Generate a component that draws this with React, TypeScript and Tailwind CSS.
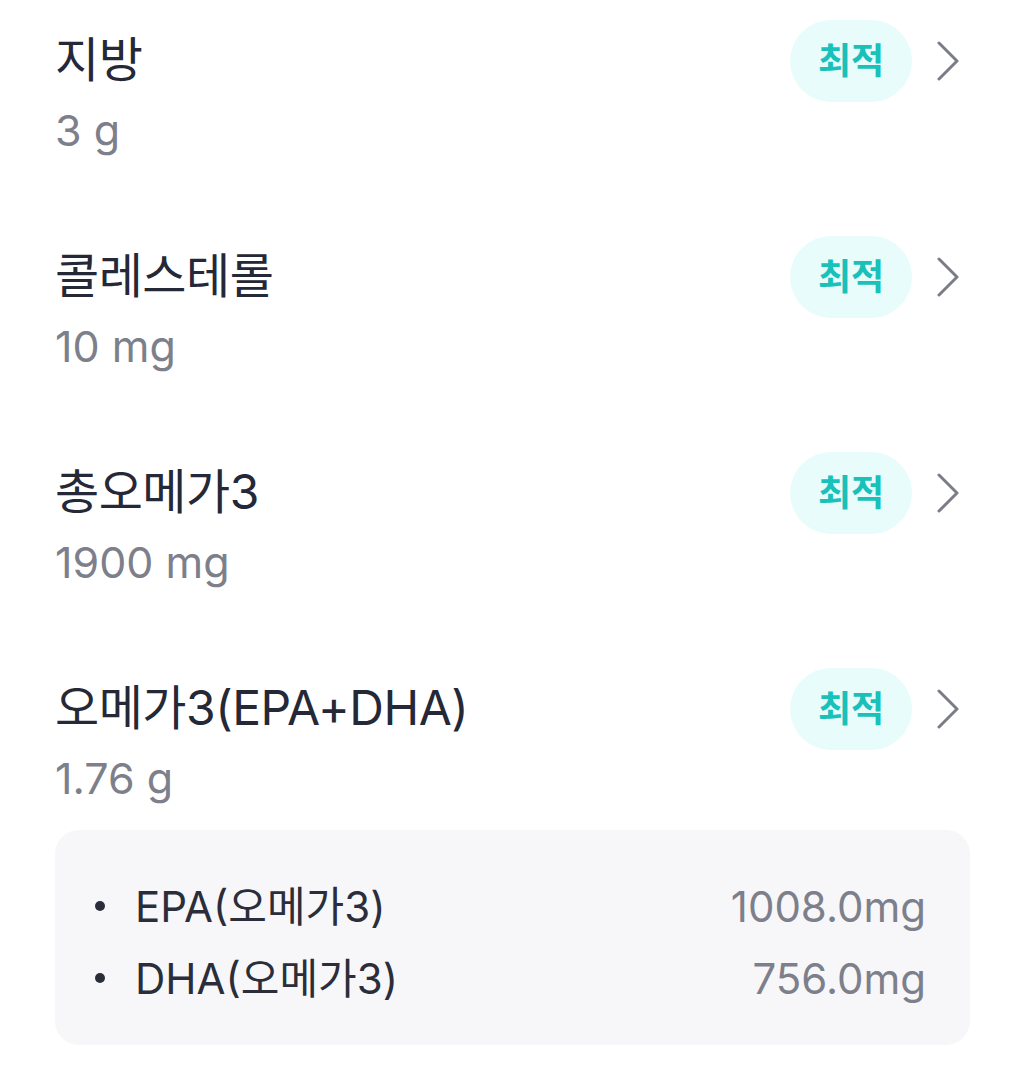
const nutrients = [
  { name: '지방', amount: '3 g' },
  { name: '콜레스테롤', amount: '10 mg' },
  { name: '총오메가3', amount: '1900 mg' },
  { name: '오메가3(EPA+DHA)', amount: '1.76 g' },
];

const details = [
  { name: 'EPA(오메가3)', value: '1008.0mg' },
  { name: 'DHA(오메가3)', value: '756.0mg' },
];

export default function App() {
  return (
    <div className="min-h-screen bg-white px-[55px] font-['Inter','Noto_Sans_CJK_KR',sans-serif]">
      {nutrients.map((item, index) => (
        <NutrientRow key={index} name={item.name} amount={item.amount} />
      ))}
      <div className="-mt-[34px] rounded-[24px] bg-[#f7f7f9] pl-[40px] pr-[44px] pt-[52px] pb-[43px]">
        <ul className="flex flex-col gap-[24px]">
          {details.map((d, index) => (
            <li key={index} className="flex h-[48px] items-center justify-between">
              <div className="flex items-center">
                <span className="h-[10px] w-[10px] rounded-full bg-[#2b2e3a]" />
                <span className="ml-[30px] text-[42px] text-[#2b2e3a]">{d.name}</span>
              </div>
              <span className="text-[42px] text-[#7d808b]">{d.value}</span>
            </li>
          ))}
        </ul>
      </div>
    </div>
  );
}

function NutrientRow({ name, amount }: { name: string; amount: string }) {
  return (
    <div className="flex h-[216px] items-start justify-between">
      <div className="mt-[30px] flex flex-col">
        <p className="h-[60px] text-[48px] leading-[60px] tracking-[-0.5px] text-[#252836]">{name}</p>
        <p className="mt-[15px] h-[50px] text-[43px] leading-[50px] text-[#7d808b]">{amount}</p>
      </div>
      <div className="mt-[20px] flex items-center">
        <span className="flex h-[82px] w-[122px] items-center justify-center rounded-full bg-[#e9fcfc] text-[36px] font-bold text-[#18c1ba]">
          최적
        </span>
        <svg className="ml-[24px] mr-[10px] h-[40px] w-[24px]" viewBox="0 0 24 40" fill="none">
          <polyline points="3,2 21,20 3,38" stroke="#7b7d86" strokeWidth="3" strokeLinecap="round" strokeLinejoin="round" />
        </svg>
      </div>
    </div>
  );
}
